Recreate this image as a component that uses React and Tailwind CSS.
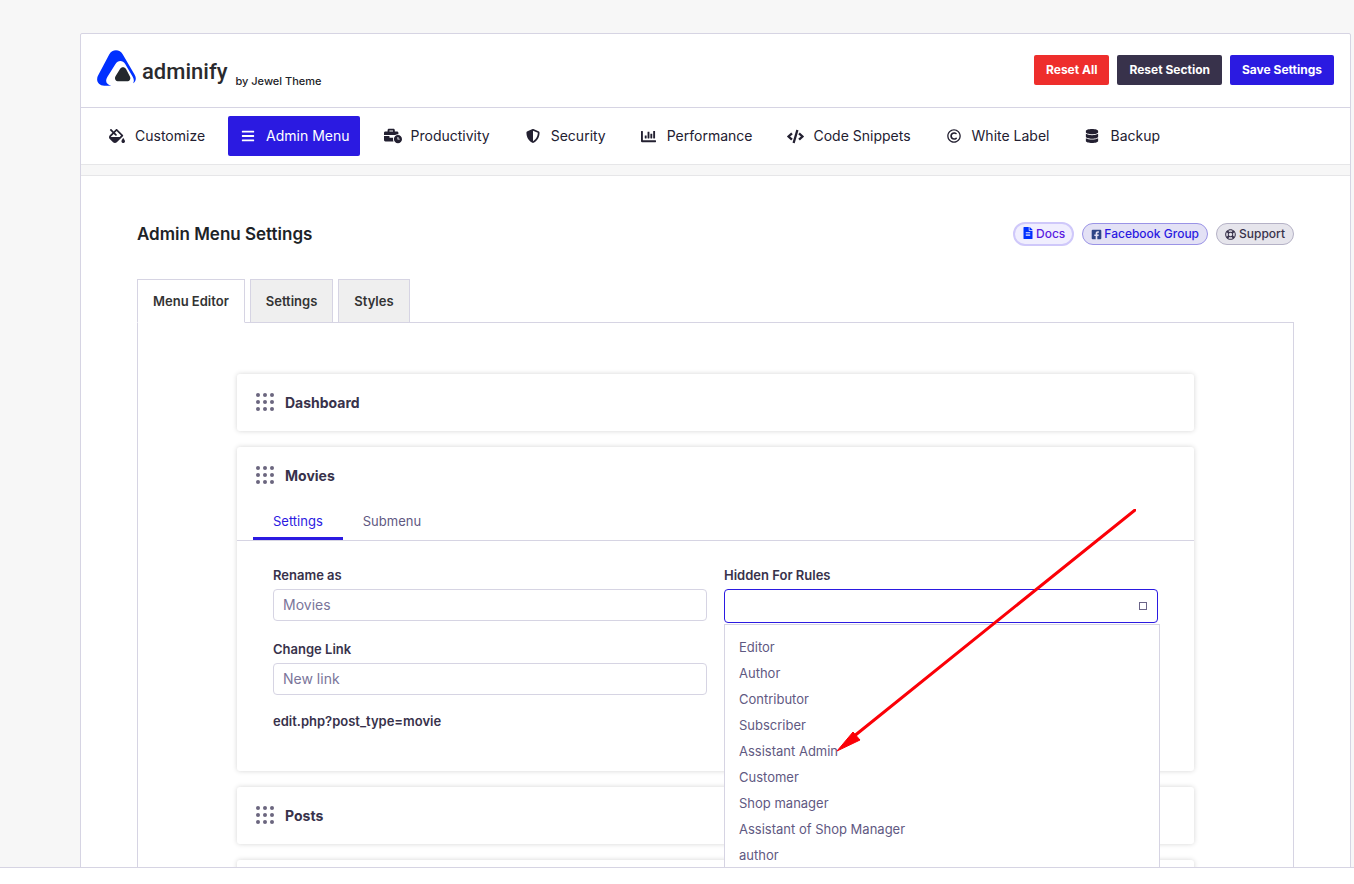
import React, { useState } from 'react';
import {
  FaFillDrip,
  FaBars,
  FaBusinessTime,
  FaChartBar,
  FaCode,
  FaRegCopyright,
  FaDatabase,
  FaFileAlt,
  FaFacebookSquare,
  FaRegLifeRing,
} from 'react-icons/fa';
import { FaShieldHalved } from 'react-icons/fa6';

const navItems = [
  { label: 'Customize', icon: FaFillDrip, size: 16 },
  { label: 'Admin Menu', icon: FaBars, size: 14 },
  { label: 'Productivity', icon: FaBusinessTime, size: 18 },
  { label: 'Security', icon: FaShieldHalved, size: 14 },
  { label: 'Performance', icon: FaChartBar, size: 15 },
  { label: 'Code Snippets', icon: FaCode, size: 17 },
  { label: 'White Label', icon: FaRegCopyright, size: 14 },
  { label: 'Backup', icon: FaDatabase, size: 14 },
];

const tabs = ['Menu Editor', 'Settings', 'Styles'];

const roles = [
  'Editor',
  'Author',
  'Contributor',
  'Subscriber',
  'Assistant Admin',
  'Customer',
  'Shop manager',
  'Assistant of Shop Manager',
  'author',
];

const Logo = () => (
  <div className="flex items-end pb-1">
    <svg width="39" height="36" viewBox="0 0 117 106" className="mr-1.5" aria-hidden="true">
      <path
        fill="#0030ff"
        d="M22 106C3 106 -5 89 4 74L37 12C45 -4 69 -4 77 12L113 73C119 83 117 95 108 99C112 92 111 86 107 79L85 42C77 29 63 29 55 42L31 80C23 94 29 103 43 106Z"
      />
      <path fill="#23282d" d="M69 56C73 49 83 49 87 56L98 77C103 86 98 93 90 93H65C56 93 51 86 56 77Z" />
    </svg>
    <span className="font-['Roboto',sans-serif] text-[22px] leading-7 font-medium text-[#2a2a2e]">adminify</span>
    <span className="ml-2 text-[11px] leading-[10px] font-medium text-[#1d2327]">by Jewel Theme</span>
  </div>
);

const Grip = () => (
  <svg width="18" height="18" viewBox="0 0 18 18" fill="#6b667f" className="mb-0.5" aria-hidden="true">
    {[2, 9, 16].map((y) => [2, 9, 16].map((x) => <circle key={`${x}-${y}`} cx={x} cy={y} r="2" />))}
  </svg>
);

const Card = ({ title, children }) => (
  <section className="min-h-[57px] rounded-[3px] bg-white shadow-[0_0_5px_rgba(0,0,0,0.17)]">
    {title && (
      <h3 className="flex h-[57px] items-center gap-[11px] px-[19px] text-sm font-bold text-[#38324b]">
        <Grip />
        {title}
      </h3>
    )}
    {children}
  </section>
);

const Field = ({ id, label, placeholder }) => (
  <div>
    <label htmlFor={id} className="mb-1 block text-[13px] leading-5 font-semibold text-[#38324b]">
      {label}
    </label>
    <input
      id={id}
      type="text"
      placeholder={placeholder}
      className="block h-8 w-full rounded border border-[#d6d4e3] bg-white px-[9px] pb-0.5 text-sm outline-none placeholder:text-[#7a759a]"
    />
  </div>
);

// Arrow that points at the "Assistant Admin" role
const Pointer = () => (
  <svg
    width="300"
    height="244"
    viewBox="0 0 300 244"
    className="pointer-events-none absolute -top-20 left-28 z-20"
    aria-hidden="true"
  >
    <path d="M299 1L17 228" stroke="#fb0007" strokeWidth="3" strokeLinecap="round" fill="none" />
    <path d="M1 242L17 223L24 231Z" fill="#fb0007" stroke="#fb0007" strokeWidth="1" />
  </svg>
);

const RoleSelect = () => (
  <div>
    <label htmlFor="hidden-for" className="mb-1 block text-[13px] leading-5 font-semibold text-[#38324b]">
      Hidden For Rules
    </label>
    <div className="relative">
      <div className="flex h-[34px] items-center rounded border border-[#2b1ae1] bg-white pr-2.5 pl-2">
        <input
          id="hidden-for"
          type="text"
          role="combobox"
          aria-expanded="true"
          aria-controls="role-list"
          className="min-w-0 flex-1 text-sm outline-none"
        />
        <span className="size-2 border border-[#6a6488]" />
      </div>
      <ul
        id="role-list"
        role="listbox"
        className="absolute top-[35px] -right-0.5 left-0 z-10 h-80 border border-[#d6d4e3] bg-white py-[9px]"
      >
        {roles.map((role) => (
          <li
            key={role}
            role="option"
            aria-selected="false"
            className="px-3.5 text-[13px] leading-[26px] text-[#5f5982]"
          >
            {role}
          </li>
        ))}
      </ul>
      <Pointer />
    </div>
  </div>
);

const App = () => {
  const [section, setSection] = useState('Admin Menu');
  const [tab, setTab] = useState('Menu Editor');
  const [cardTab, setCardTab] = useState('Settings');

  return (
    <div className="flex h-screen flex-col bg-white font-['Inter',sans-serif]">
      <main className="min-h-0 flex-1 overflow-hidden bg-[#f7f7f7] pt-[33px] pr-[3px] pl-20">
        <div className="rounded-t-xs border border-[#d6d4e3] bg-white">
          <header className="flex h-[74px] items-center justify-between border-b border-[#d6d4e3] px-4 pb-0.5">
            <Logo />
            <div className="flex gap-2 text-xs font-bold text-white">
              <button className="h-[30px] rounded-xs bg-[#ee2e2c] px-3">Reset All</button>
              <button className="h-[30px] rounded-xs bg-[#38324b] px-3">Reset Section</button>
              <button className="h-[30px] rounded-xs bg-[#2b1ae1] px-3">Save Settings</button>
            </div>
          </header>

          <nav className="flex gap-[13px] px-4 py-2">
            {navItems.map(({ label, icon: Icon, size }) => (
              <button
                key={label}
                onClick={() => setSection(label)}
                className={`flex h-10 items-center gap-2 rounded-xs px-2.5 text-sm ${
                  section === label ? 'bg-[#2b1ae1] text-white' : 'text-[#232031]'
                }`}
              >
                <span className="flex w-5 justify-center">
                  <Icon size={size} />
                </span>
                {label}
              </button>
            ))}
          </nav>
          <div className="h-3 border-y border-[#e6e6e8] bg-[#f7f7f7]" />

          <div className="px-14 pt-[46px]">
            <div className="flex h-6 items-center justify-between">
              <h2 className="pt-0.5 text-[17px] font-semibold text-[#1d2327]">Admin Menu Settings</h2>
              <div className="flex items-center gap-2 text-xs font-medium">
                <a
                  href="#docs"
                  className="flex h-6 items-center gap-0.5 rounded-full border-2 border-[#cfc8fa] bg-[#f0eefe] px-[7px] text-[#5a1ae1]"
                >
                  <FaFileAlt size={12} className="mb-[3px] text-[#0030ff]" />
                  Docs
                </a>
                <a
                  href="#group"
                  className="flex h-[22px] items-center gap-0.5 rounded-full border border-[#9a93e6] bg-[#e3e1f5] px-2 text-[#2b1ae1]"
                >
                  <FaFacebookSquare size={11} className="text-[#2d4486]" />
                  Facebook Group
                </a>
                <a
                  href="#support"
                  className="flex h-[22px] items-center gap-[3px] rounded-full border border-[#b5b2c6] bg-[#e6e5ec] px-2 text-[#38324b]"
                >
                  <FaRegLifeRing size={11} />
                  Support
                </a>
              </div>
            </div>

            <div className="mt-[33px] flex gap-[5px]">
              {tabs.map((name) => (
                <button
                  key={name}
                  onClick={() => setTab(name)}
                  className={`relative -mb-px h-11 border border-[#d6d4e3] px-[15px] pt-0.5 text-[13px] font-semibold text-[#333333] ${
                    tab === name ? 'border-b-white bg-white' : 'bg-[#efefef]'
                  }`}
                >
                  {name}
                </button>
              ))}
            </div>

            <div className="flex flex-col gap-4 border border-[#d6d4e3] px-[99px] py-[51px]">
              <Card title="Dashboard" />

              <Card title="Movies">
                <div className="flex h-[37px] border-b border-[#d6d4e3] px-4">
                  {['Settings', 'Submenu'].map((name) => (
                    <button
                      key={name}
                      onClick={() => setCardTab(name)}
                      className={`rounded-t-xs border-b-3 px-5 pt-0.5 text-[13px] ${
                        cardTab === name ? 'border-[#2b1ae1] text-[#2b1ae1]' : 'border-transparent text-[#5f5982]'
                      }`}
                    >
                      {name}
                    </button>
                  ))}
                </div>
                <div className="grid grid-cols-2 gap-[17px] px-9 pt-6 pb-10">
                  <div>
                    <div className="flex flex-col gap-[18px]">
                      <Field id="rename" label="Rename as" placeholder="Movies" />
                      <Field id="link" label="Change Link" placeholder="New link" />
                    </div>
                    <p className="mt-4 text-[13px] leading-5 font-semibold text-[#38324b]">edit.php?post_type=movie</p>
                  </div>
                  <RoleSelect />
                </div>
              </Card>

              <Card title="Posts" />
              <Card />
            </div>
          </div>
        </div>
      </main>
      <footer className="h-[17px] shrink-0 border-t border-[#d6d4e3] bg-white" />
    </div>
  );
};

export default App;
